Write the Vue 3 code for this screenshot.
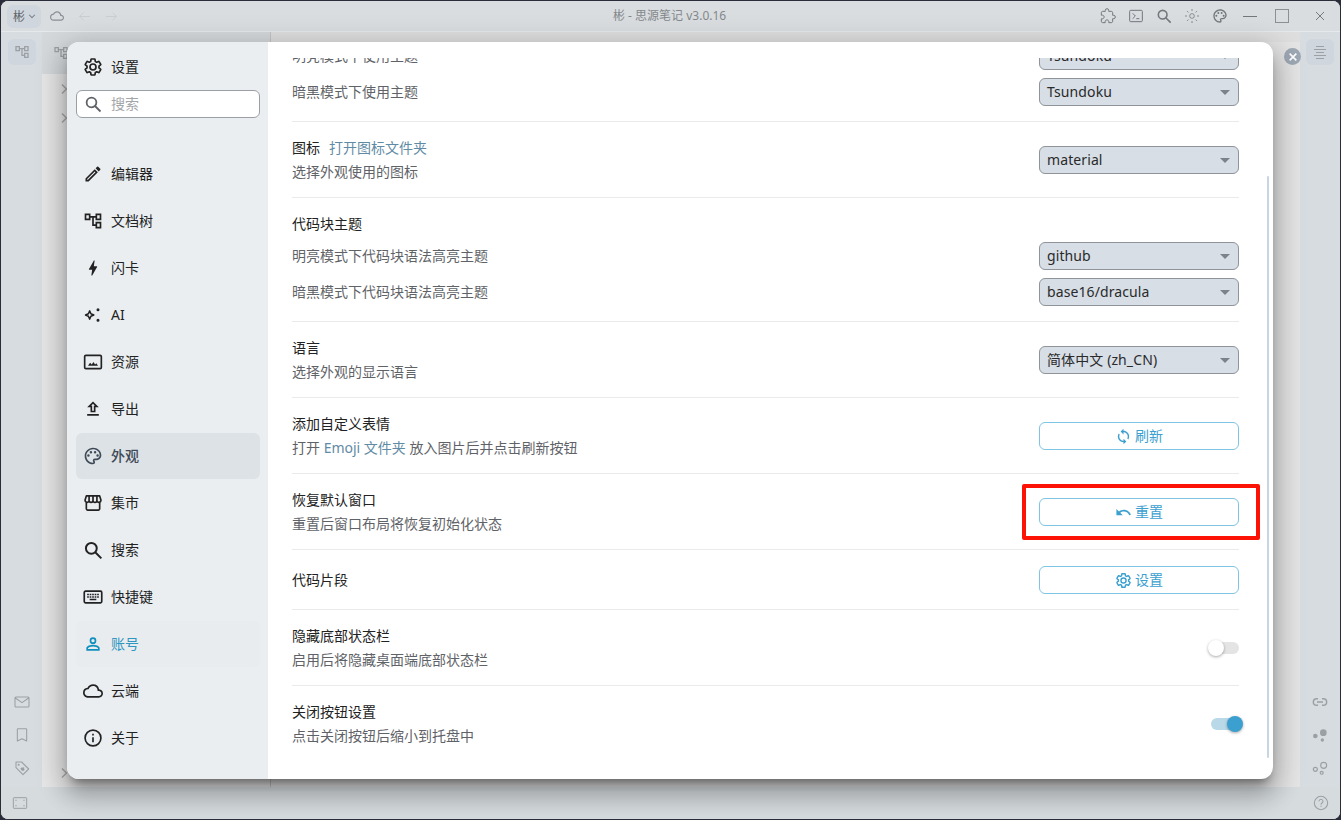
<script setup>
import { h } from 'vue'

const P = {
  gear: 'M19.14 12.94c.04-.3.06-.61.06-.94 0-.32-.02-.64-.07-.94l2.03-1.58c.18-.14.23-.41.12-.61l-1.92-3.32c-.12-.22-.37-.29-.59-.22l-2.39.96c-.5-.38-1.03-.7-1.62-.94l-.36-2.54c-.04-.24-.24-.41-.48-.41h-3.84c-.24 0-.43.17-.47.41l-.36 2.54c-.59.24-1.13.57-1.62.94l-2.39-.96c-.22-.08-.47 0-.59.22L2.74 8.87c-.12.21-.08.47.12.61l2.03 1.58c-.05.3-.09.63-.09.94s.02.64.07.94l-2.03 1.58c-.18.14-.23.41-.12.61l1.92 3.32c.12.22.37.29.59.22l2.39-.96c.5.38 1.03.7 1.62.94l.36 2.54c.05.24.24.41.48.41h3.84c.24 0 .44-.17.47-.41l.36-2.54c.59-.24 1.13-.56 1.62-.94l2.39.96c.22.08.47 0 .59-.22l1.92-3.32c.12-.22.07-.47-.12-.61l-2.01-1.58zM12 15.6c-1.98 0-3.6-1.62-3.6-3.6s1.62-3.6 3.6-3.6 3.6 1.62 3.6 3.6-1.62 3.6-3.6 3.6z',
  edit: 'M3 17.25V21h3.75L17.81 9.94l-3.75-3.75L3 17.25zM5.92 19H5v-.92l9.06-9.06.92.92L5.92 19zM20.71 7.04a1 1 0 0 0 0-1.41l-2.34-2.34a1 1 0 0 0-1.41 0l-1.83 1.83 3.75 3.75 1.83-1.83z',
  tree: 'M22 11V3h-7v3H9V3H2v8h7V8h2v10h4v3h7v-8h-7v3h-2V8h2v3h7zM7 9H4V5h3v4zm10 6h3v4h-3v-4zm0-10h3v4h-3V5z',
  bolt: 'M11 21h-1l1-7H7.5c-.58 0-.57-.32-.38-.66.19-.34.05-.08.07-.12C8.48 10.94 10.42 7.54 13 3h1l-1 7h3.5c.49 0 .56.33.47.51l-.07.15C12.96 17.55 11 21 11 21z',
  export: 'M9 16h6v-6h4l-7-7-7 7h4v6zm3-10.17L14.17 8H13v6h-2V8H9.83L12 5.83zM5 18h14v2H5z',
  palette: 'M12 22C6.49 22 2 17.51 2 12S6.49 2 12 2s10 4.04 10 9c0 3.31-2.69 6-6 6h-1.77c-.28 0-.5.22-.5.5 0 .12.05.23.13.33.41.47.64 1.06.64 1.67A2.5 2.5 0 0 1 12 22zm0-18c-4.41 0-8 3.59-8 8s3.59 8 8 8c.28 0 .5-.22.5-.5a.54.54 0 0 0-.14-.35c-.41-.46-.63-1.05-.63-1.65a2.5 2.5 0 0 1 2.5-2.5H16c2.21 0 4-1.79 4-4 0-3.86-3.59-7-8-7zM6.5 10a1.5 1.5 0 1 1 0 3 1.5 1.5 0 0 1 0-3zM9.5 6a1.5 1.5 0 1 1 0 3 1.5 1.5 0 0 1 0-3zM14.5 6a1.5 1.5 0 1 1 0 3 1.5 1.5 0 0 1 0-3zM17.5 10a1.5 1.5 0 1 1 0 3 1.5 1.5 0 0 1 0-3z',
  person: 'M12 4a4 4 0 1 0 0 8 4 4 0 0 0 0-8zm0 2a2 2 0 1 1 0 4 2 2 0 0 1 0-4zm0 7c-2.67 0-8 1.34-8 4v3h16v-3c0-2.66-5.33-4-8-4zm-6 5v-1c.2-.72 3.3-2 6-2s5.8 1.28 6 2v1H6z',
  cloud: 'M19.35 10.04A7.49 7.49 0 0 0 12 4C9.11 4 6.6 5.64 5.35 8.04A5.994 5.994 0 0 0 0 14c0 3.31 2.69 6 6 6h13c2.76 0 5-2.24 5-5 0-2.64-2.05-4.78-4.65-4.96zM19 18H6c-2.21 0-4-1.79-4-4s1.79-4 4-4h.71C7.37 7.69 9.48 6 12 6c3.04 0 5.5 2.46 5.5 5.5v.5H19c1.66 0 3 1.34 3 3s-1.34 3-3 3z',
  sync: 'M12 4V1L8 5l4 4V6c3.31 0 6 2.69 6 6 0 1.01-.25 1.97-.7 2.8l1.46 1.46A7.93 7.93 0 0 0 20 12c0-4.42-3.58-8-8-8zm0 14c-3.31 0-6-2.69-6-6 0-1.01.25-1.97.7-2.8L5.24 7.74A7.93 7.93 0 0 0 4 12c0 4.42 3.58 8 8 8v3l4-4-4-4v3z',
  undo: 'M12.5 8c-2.65 0-5.05.99-6.9 2.6L2 7v9h9l-3.62-3.62c1.39-1.16 3.16-1.88 5.12-1.88 3.54 0 6.55 2.31 7.6 5.5l2.37-.78C21.08 11.03 17.15 8 12.5 8z',
  plugin: 'M20.5 11H19V7c0-1.1-.9-2-2-2h-4V3.5a2.5 2.5 0 0 0-5 0V5H4c-1.1 0-1.99.9-1.99 2v3.8H3.5c1.49 0 2.7 1.21 2.7 2.7s-1.21 2.7-2.7 2.7H2V20c0 1.1.9 2 2 2h3.8v-1.5c0-1.49 1.21-2.7 2.7-2.7 1.49 0 2.7 1.21 2.7 2.7V22H17c1.1 0 2-.9 2-2v-4h1.5a2.5 2.5 0 0 0 0-5z'
}

const f = (d) => ({ d })
const s = (d, w = 2) => ({ d, w })
const ICONS = {
  gear: [s(P.gear, 2)],
  search: [s('M10 3.5a6.5 6.5 0 1 0 0 13 6.5 6.5 0 0 0 0-13zM15 15l7 7', 2.4)],
  edit: [f(P.edit)],
  tree: [f(P.tree)],
  bolt: [f(P.bolt)],
  ai: [s('M8 7l1.5 3.5L13 12l-3.5 1.5L8 17l-1.5-3.5L3 12l3.5-1.5z', 1.8), f('M18 4a1.8 1.8 0 1 1 0 3.6A1.8 1.8 0 0 1 18 4zM18 16.4a1.8 1.8 0 1 1 0 3.6 1.8 1.8 0 0 1 0-3.6z')],
  image: [s('M3.5 4h17A1.5 1.5 0 0 1 22 5.500v13a1.500 1.500 0 0 1-1.500 1.500h-17A1.500 1.500 0 0 1 2 18.500v-13A1.500 1.500 0 0 1 3.500 4z'), f('M6 16.500l2.500-3.500 2 2 2-3 2 3 1.500-1.500 2 3z')],
  export: [f(P.export)],
  palette: [f(P.palette)],
  store: [s('M4 11v8a1.500 1.500 0 0 0 1.500 1.500h13A1.500 1.500 0 0 0 20 19v-8M2.500 8.500 4 3.500h16l1.500 5a2.400 2.400 0 0 1-4.800.5 2.350 2.350 0 0 1-4.700 0 2.350 2.350 0 0 1-4.700 0 2.400 2.400 0 0 1-4.800-.5zM7.300 4v5M12 4v5M16.700 4v5')],
  keyboard: [s('M3 5h18a1.500 1.500 0 0 1 1.500 1.500v11A1.500 1.500 0 0 1 21 19H3a1.500 1.500 0 0 1-1.500-1.500v-11A1.500 1.500 0 0 1 3 5z'), f('M5 8h2v2H5zM8 8h2v2H8zM11 8h2v2h-2zM14 8h2v2h-2zM17 8h2v2h-2zM5 11h2v2H5zM8 11h2v2H8zM11 11h2v2h-2zM14 11h2v2h-2zM17 11h2v2h-2zM8 14h8v2H8z')],
  person: [f(P.person)],
  cloud: [f(P.cloud)],
  info: [s('M12 2.500a9.500 9.500 0 1 0 0 19 9.500 9.500 0 0 0 0-19z'), f('M11 11h2v6h-2zM11 7h2v2h-2z')],
  sync: [f(P.sync)],
  undo: [f(P.undo)],
  plugin: [s(P.plugin, 1.5)],
  terminal: [s('M4 3.500h16A1.500 1.500 0 0 1 21.500 5v14a1.500 1.500 0 0 1-1.500 1.500H4A1.500 1.500 0 0 1 2.500 19V5A1.500 1.500 0 0 1 4 3.500zM7 8l4 4-4 4M12.500 16H17', 1.5)],
  sun: [s('M12 8.500a3.500 3.500 0 1 0 0 7 3.500 3.500 0 0 0 0-7zM12 1.500v3M12 19.500v3M1.500 12h3M19.500 12h3M4.600 4.600l2.100 2.100M17.300 17.300l2.100 2.100M4.600 19.400l2.100-2.100M17.300 6.700l2.100-2.100', 1.2)],
  back: [s('M22 12H3M10 5l-7 7 7 7', 1.500)],
  forward: [s('M2 12h19M14 5l7 7-7 7', 1.500)],
  chevdown: [s('M5 9l7 7 7-7', 2.500)],
  chevright: [s('M8 3l9 9-9 9', 3)],
  mail: [s('M3 4.500h18A1.500 1.500 0 0 1 22.500 6v12a1.500 1.500 0 0 1-1.500 1.500H3A1.500 1.500 0 0 1 1.500 18V6A1.500 1.500 0 0 1 3 4.500zM2 6l10 7 10-7', 1.600)],
  bookmark: [s('M6 2.500h12a1 1 0 0 1 1 1V21l-7-3.500L5 21V3.500a1 1 0 0 1 1-1z', 1.600)],
  tag: [s('M3 3h8.500L22 13.500 13.500 22 3 11.500z', 1.600), f('M7 5.500a1.500 1.500 0 1 1 0 3 1.500 1.500 0 0 1 0-3zM13.500 11c1-1 2.800.8 1.800 1.800l-.3.300 1 1.500-2 2-2.500-1-2-2.500 1.500-2 1.500.700z')],
  dock: [s('M3 4h18a1 1 0 0 1 1 1v14a1 1 0 0 1-1 1H3a1 1 0 0 1-1-1V5a1 1 0 0 1 1-1z', 1.500), f('M5 7h2v1.500H5zM17 7h2v1.500h-2zM5 15.500h2V17H5zM17 15.500h2V17h-2z')],
  outline: [f('M6 3h12v1.500H6zM3 7.500h18V9H3zM6 12h12v1.500H6zM3 16.500h18V18H3zM6 21h12v1.500H6z')],
  link: [s('M9 7H7a5 5 0 0 0 0 10h2M15 7h2a5 5 0 0 1 0 10h-2M7.500 12h9', 2.200)],
  dotsFill: [f('M17 3.500a5 5 0 1 1 0 10 5 5 0 0 1 0-10zM5 10a3.500 3.500 0 1 1 0 7 3.500 3.500 0 0 1 0-7zM15.500 17a2.500 2.500 0 1 1 0 5 2.500 2.500 0 0 1 0-5z')],
  dotsLine: [s('M17.500 3.500a4.500 4.500 0 1 1 0 9 4.500 4.500 0 0 1 0-9zM5 11a3 3 0 1 1 0 6 3 3 0 0 1 0-6zM14.500 17a2.200 2.200 0 1 1 0 4.400 2.200 2.200 0 0 1 0-4.400z', 1.800)],
  help: [s('M12 2a10 10 0 1 0 0 20 10 10 0 0 0 0-20zM9 9.500a3 3 0 1 1 4.500 2.600c-1 .6-1.500 1.100-1.500 2.400', 1.600), f('M11.100 16h1.800v1.800h-1.800z')],
  close: [s('M4 4l16 16M20 4L4 20', 1.800)],
  closeBold: [s('M4 4l16 16M20 4L4 20', 4)]
}

const Icon = (props) =>
  h('svg', { viewBox: '0 0 24 24', 'aria-hidden': 'true' },
    ICONS[props.name].map((p) =>
      p.w
        ? h('path', { d: p.d, fill: 'none', stroke: 'currentColor', 'stroke-width': p.w, 'stroke-linejoin': 'round' })
        : h('path', { d: p.d, fill: 'currentColor', 'fill-rule': 'evenodd' })
    ))
Icon.props = ['name']

const nav = [
  { icon: 'edit', label: '编辑器' },
  { icon: 'tree', label: '文档树' },
  { icon: 'bolt', label: '闪卡' },
  { icon: 'ai', label: 'AI' },
  { icon: 'image', label: '资源' },
  { icon: 'export', label: '导出' },
  { icon: 'palette', label: '外观', state: 'current' },
  { icon: 'store', label: '集市' },
  { icon: 'search', label: '搜索' },
  { icon: 'keyboard', label: '快捷键' },
  { icon: 'person', label: '账号', state: 'account' },
  { icon: 'cloud', label: '云端' },
  { icon: 'info', label: '关于' }
]
const titleIcons = ['plugin', 'terminal', 'search', 'sun', 'palette']
</script>

<template>
  <div class="win">
    <header class="titlebar">
      <div class="tb-left">
        <div class="workspace"><span>彬</span><Icon name="chevdown" class="i-chev" /></div>
        <Icon name="cloud" class="tb-cloud" />
        <Icon name="back" class="tb-arrow" />
        <Icon name="forward" class="tb-arrow" />
      </div>
      <div class="tb-title">彬 - 思源笔记 v3.0.16</div>
      <div class="tb-right">
        <Icon v-for="n in titleIcons" :key="n" :name="n" class="tb-icon" />
        <div class="tb-controls">
          <span class="ctl-min"></span>
          <span class="ctl-max"></span>
          <Icon name="close" class="ctl-close" />
        </div>
      </div>
    </header>

    <div class="body">
      <aside class="dock dock-l">
        <div class="dock-btn"><Icon name="tree" class="dock-i" /></div>
        <div class="dock-bottom">
          <Icon name="mail" class="dock-i" />
          <Icon name="bookmark" class="dock-i" />
          <Icon name="tag" class="dock-i" />
        </div>
      </aside>
      <section class="panel">
        <div class="panel-head"><Icon name="tree" class="dock-i" /></div>
        <div class="panel-tree">
          <Icon name="chevright" class="tree-chev" />
          <Icon name="chevright" class="tree-chev" />
          <Icon name="chevright" class="tree-chev tree-last" />
        </div>
      </section>
      <section class="pane"><div class="pane-tabs"></div></section>
      <aside class="dock dock-r">
        <div class="dock-btn"><Icon name="outline" class="dock-i" /></div>
        <div class="dock-bottom">
          <Icon name="link" class="dock-i" />
          <Icon name="dotsFill" class="dock-i" />
          <Icon name="dotsLine" class="dock-i" />
        </div>
      </aside>
    </div>

    <footer class="status">
      <Icon name="dock" class="dock-i" />
      <Icon name="help" class="dock-i" />
    </footer>

    <div class="mask-close"><Icon name="closeBold" class="mask-x" /></div>

    <div class="dialog">
      <aside class="side">
        <div class="side-head"><Icon name="gear" class="nav-i" /><span class="lbl">设置</span></div>
        <div class="side-search"><Icon name="search" class="search-i" /><span class="lbl">搜索</span></div>
        <nav class="side-nav">
          <div v-for="n in nav" :key="n.label" class="nav-item" :class="n.state">
            <Icon :name="n.icon" class="nav-i" /><span class="lbl">{{ n.label }}</span>
          </div>
        </nav>
      </aside>

      <main class="main">
        <div class="scroller">
          <div class="rows">
            <div class="row first stack">
              <div class="pair"><span class="desc">明亮模式下使用主题</span><div class="select"><span>Tsundoku</span><i></i></div></div>
              <div class="pair"><span class="desc">暗黑模式下使用主题</span><div class="select"><span>Tsundoku</span><i></i></div></div>
            </div>
            <div class="row">
              <div class="text"><div class="title">图标<span class="link lead">打开图标文件夹</span></div><div class="desc">选择外观使用的图标</div></div>
              <div class="select"><span>material</span><i></i></div>
            </div>
            <div class="row stack">
              <div class="title">代码块主题</div>
              <div class="pair"><span class="desc">明亮模式下代码块语法高亮主题</span><div class="select"><span>github</span><i></i></div></div>
              <div class="pair"><span class="desc">暗黑模式下代码块语法高亮主题</span><div class="select"><span>base16/dracula</span><i></i></div></div>
            </div>
            <div class="row">
              <div class="text"><div class="title">语言</div><div class="desc">选择外观的显示语言</div></div>
              <div class="select"><span>简体中文 (zh_CN)</span><i></i></div>
            </div>
            <div class="row">
              <div class="text"><div class="title">添加自定义表情</div><div class="desc">打开 <span class="link">Emoji 文件夹</span> 放入图片后并点击刷新按钮</div></div>
              <button class="btn"><Icon name="sync" class="btn-i" /><span class="lbl">刷新</span></button>
            </div>
            <div class="row">
              <div class="text"><div class="title">恢复默认窗口</div><div class="desc">重置后窗口布局将恢复初始化状态</div></div>
              <button class="btn"><Icon name="undo" class="btn-i" /><span class="lbl">重置</span></button>
            </div>
            <div class="row single">
              <div class="title">代码片段</div>
              <button class="btn"><Icon name="gear" class="btn-i" /><span class="lbl">设置</span></button>
            </div>
            <div class="row">
              <div class="text"><div class="title">隐藏底部状态栏</div><div class="desc">启用后将隐藏桌面端底部状态栏</div></div>
              <div class="switch"><b></b></div>
            </div>
            <div class="row last">
              <div class="text"><div class="title">关闭按钮设置</div><div class="desc">点击关闭按钮后缩小到托盘中</div></div>
              <div class="switch on"><b></b></div>
            </div>
          </div>
        </div>
        <div class="scrollbar"></div>
      </main>
    </div>

    <div class="highlight"></div>
  </div>
</template>

<style>
html, body { margin: 0; background: #2a2c3a; overflow: hidden; }
</style>

<style scoped>
.win {
  position: relative;
  width: 1341px;
  height: 820px;
  box-sizing: border-box;
  border: 1px solid #2a2c3a;
  border-radius: 8px;
  overflow: hidden;
  display: flex;
  flex-direction: column;
  background: #d8dde1;
  font-family: "Noto Sans", "Noto Sans CJK SC", sans-serif;
  font-size: 14px;
  color: #222;
}
svg { display: block; flex: none; }
.lbl { position: relative; top: -1px; }

.titlebar {
  height: 30px;
  flex: none;
  display: flex;
  align-items: center;
  justify-content: space-between;
  position: relative;
  background: #d9dde0;
  border-bottom: 1px solid #e6e9eb;
}
.tb-left { display: flex; align-items: center; padding-left: 6px; }
.workspace {
  width: 34px;
  height: 23px;
  box-sizing: border-box;
  padding-left: 6px;
  display: flex;
  align-items: center;
  gap: 2px;
  border-radius: 6px;
  background: #cfd6dd;
  color: #5f6368;
  font-size: 12px;
}
.i-chev { width: 10px; height: 10px; color: #7a8087; }
.tb-cloud { width: 14px; height: 14px; margin-left: 9px; color: #8a8f94; }
.tb-arrow { width: 13px; height: 13px; margin-left: 14px; color: #c6cace; }
.tb-title {
  position: absolute;
  left: 612px;
  top: 6px;
  font-size: 12px;
  line-height: 17px;
  color: #84888c;
}
.tb-right { display: flex; align-items: center; }
.tb-icon { width: 16px; height: 16px; margin-right: 12px; color: #73787d; }
.tb-controls { display: flex; align-items: center; }
.ctl-min { width: 14px; height: 1px; background: #73787d; margin-left: 3px; }
.ctl-max { width: 12px; height: 12px; border: 1px solid #8b9095; margin-left: 18px; }
.ctl-close { width: 12px; height: 12px; margin-left: 25px; margin-right: 14px; color: #6a6f74; }

.body { flex: 1; display: flex; min-height: 0; }
.dock {
  flex: none;
  display: flex;
  flex-direction: column;
  justify-content: space-between;
  align-items: center;
  background: #d7dce0;
}
.dock-l { width: 41px; }
.dock-r { width: 40px; }
.dock-btn {
  width: 28px;
  height: 26px;
  margin-top: 7px;
  border-radius: 6px;
  background: #cfd6de;
  display: flex;
  align-items: center;
  justify-content: center;
}
.dock-i { width: 16px; height: 16px; color: #9ca0a4; }
.dock-bottom { display: flex; flex-direction: column; gap: 17px; padding-bottom: 11px; }

.panel { width: 228px; flex: none; display: flex; flex-direction: column; background: #e6e6e6; }
.panel-head { height: 42px; flex: none; background: #d4d8da; display: flex; align-items: center; padding-left: 11px; }
.panel-tree { flex: 1; display: flex; flex-direction: column; padding: 9px 0 0 16px; gap: 17px; position: relative; }
.tree-chev { width: 12px; height: 12px; color: #a9a9a9; }
.tree-last { margin-top: auto; margin-bottom: 8px; }
.pane { flex: 1; background: #e4e4e4; border-left: 1px solid #c4c4c4; }
.pane-tabs { height: 10px; background: #dedede; }

.status {
  height: 32px;
  flex: none;
  display: flex;
  align-items: center;
  justify-content: space-between;
  padding: 0 11px 0 11px;
  background: #d6dbde;
}

.mask-close {
  position: absolute;
  left: 1283px;
  top: 47px;
  width: 17px;
  height: 17px;
  border-radius: 50%;
  background: #9ea8b5;
  display: flex;
  align-items: center;
  justify-content: center;
}
.mask-x { width: 10px; height: 10px; color: #fff; }

.dialog {
  position: absolute;
  left: 66px;
  top: 41px;
  width: 1206px;
  height: 737px;
  display: flex;
  border-radius: 12px;
  overflow: hidden;
  background: #fff;
  box-shadow: 0 16px 24px 2px rgba(0, 0, 0, .2), 0 6px 30px 5px rgba(0, 0, 0, .16), 0 8px 10px -5px rgba(0, 0, 0, .4);
}
.side {
  width: 201px;
  flex: none;
  box-sizing: border-box;
  padding: 13px 8px 0 9px;
  background: #eaeef1;
}
.side-head { height: 24px; display: flex; align-items: center; padding-left: 9px; }
.nav-i { width: 20px; height: 20px; margin: 0 8px 0 -2px; color: #222; }
.side-search {
  height: 28px;
  box-sizing: border-box;
  margin-top: 11px;
  padding-left: 8px;
  display: flex;
  align-items: center;
  background: #fff;
  border: 1px solid #9a9fa4;
  border-radius: 6px;
  color: #a3a6a9;
}
.search-i { width: 18px; height: 18px; margin: 0 9px 0 -1px; color: #5f6368; }
.side-nav { margin-top: 33px; display: flex; flex-direction: column; gap: 1px; }
.nav-item {
  height: 46px;
  display: flex;
  align-items: center;
  padding-left: 9px;
  border-radius: 6px;
}
.nav-item.current { background: #dce2e6; color: #3f4a57; font-weight: 500; }
.nav-item.current .nav-i { color: #3f4a57; }
.nav-item.account { background: #e8ecef; color: #2f96bf; }
.nav-item.account .nav-i { color: #0f8fbe; }

.main { flex: 1; position: relative; padding: 16px 28px 0 24px; min-width: 0; }
.scroller { height: 721px; overflow: hidden; }
.rows { margin-top: -16px; margin-right: 6px; }
.row {
  display: flex;
  align-items: center;
  justify-content: space-between;
  padding: 14px 0 13px;
  border-bottom: 1px solid #eaeaea;
}
.row.stack { display: block; padding-bottom: 15px; }
.row.first { padding-top: 0; }
.row.single { padding: 16px 0 15px; }
.row.last { border-bottom: 0; }
.stack .title { margin-bottom: 6px; }
.pair { display: flex; align-items: center; justify-content: space-between; height: 28px; }
.pair + .pair { margin-top: 8px; }
.title, .desc { line-height: 24px; }
.desc { color: #5f6368; }
.link { color: #5f8ba5; }
.lead { margin-left: 9px; }
.select {
  width: 200px;
  height: 28px;
  flex: none;
  box-sizing: border-box;
  padding: 0 8px 2px 7px;
  display: flex;
  align-items: center;
  justify-content: space-between;
  background: #d7dee6;
  border: 1px solid #8e949a;
  border-radius: 6px;
  color: #2a2a2a;
  letter-spacing: .1px;
}
.select i {
  width: 0;
  height: 0;
  margin-top: 2px;
  border-left: 5px solid transparent;
  border-right: 5px solid transparent;
  border-top: 5px solid #7c8288;
}
.btn {
  width: 200px;
  height: 28px;
  flex: none;
  box-sizing: border-box;
  padding: 0;
  display: flex;
  align-items: center;
  justify-content: center;
  gap: 3px;
  background: #fff;
  border: 1px solid #7fc4e3;
  border-radius: 6px;
  color: #3b9fd0;
  font: inherit;
}
.btn-i { width: 17px; height: 17px; }
.switch { position: relative; width: 28px; height: 12px; border-radius: 6px; background: #e4e4e4; flex: none; }
.switch b {
  position: absolute;
  left: -3px;
  top: -2px;
  width: 16px;
  height: 16px;
  border-radius: 50%;
  background: #fff;
  box-shadow: 0 1px 3px rgba(0, 0, 0, .35);
}
.switch.on { background: #b9d9e9; }
.switch.on b { left: 16px; background: #3b9fd0; }
.scrollbar {
  position: absolute;
  right: 4px;
  top: 134px;
  width: 2px;
  height: 582px;
  background: #c9d6e1;
  border-radius: 1px;
}
.highlight {
  position: absolute;
  left: 1021px;
  top: 483px;
  width: 238px;
  height: 56px;
  box-sizing: border-box;
  border: 4px solid #fd1206;
  border-radius: 2px;
  pointer-events: none;
}
</style>
